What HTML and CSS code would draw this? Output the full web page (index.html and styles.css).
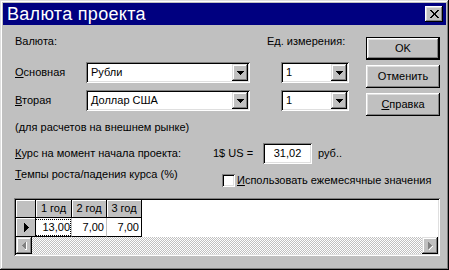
FILE: index.html
```html
<!DOCTYPE html>
<html lang="ru">
<head>
<meta charset="utf-8">
<title>Валюта проекта</title>
<link rel="stylesheet" href="styles.css">
</head>
<body>
<div class="window">
  <div class="titlebar">
    <span class="title">Валюта проекта</span>
    <div class="close">
      <svg width="9" height="8" viewBox="0 0 9 8" shape-rendering="crispEdges"><path d="M0 0h2v1H0zM7 0h2v1H7zM1 1h2v1H1zM6 1h2v1H6zM2 2h2v1H2zM5 2h2v1H5zM3 3h3v2H3zM2 5h2v1H2zM5 5h2v1H5zM1 6h2v1H1zM6 6h2v1H6zM0 7h2v1H0zM7 7h2v1H7z" fill="#000"/></svg>
    </div>
  </div>
  <div class="body">
    <div class="top">
      <div class="form">
        <div class="head">
          <span class="head-left">Валюта:</span>
          <span>Ед. измерения:</span>
        </div>
        <div class="row row-first">
          <span class="lbl"><u>О</u>сновная</span>
          <div class="combo combo-wide">
            <span class="val">Рубли</span>
            <span class="drop"><svg width="7" height="4" viewBox="0 0 7 4" shape-rendering="crispEdges"><path d="M0 0h7v1H0zM1 1h5v1H1zM2 2h3v1H2zM3 3h1v1H3z" fill="#000"/></svg></span>
          </div>
          <div class="combo combo-narrow">
            <span class="val">1</span>
            <span class="drop"><svg width="7" height="4" viewBox="0 0 7 4" shape-rendering="crispEdges"><path d="M0 0h7v1H0zM1 1h5v1H1zM2 2h3v1H2zM3 3h1v1H3z" fill="#000"/></svg></span>
          </div>
        </div>
        <div class="row row-second">
          <span class="lbl"><u>В</u>торая</span>
          <div class="combo combo-wide">
            <span class="val">Доллар США</span>
            <span class="drop"><svg width="7" height="4" viewBox="0 0 7 4" shape-rendering="crispEdges"><path d="M0 0h7v1H0zM1 1h5v1H1zM2 2h3v1H2zM3 3h1v1H3z" fill="#000"/></svg></span>
          </div>
          <div class="combo combo-narrow">
            <span class="val">1</span>
            <span class="drop"><svg width="7" height="4" viewBox="0 0 7 4" shape-rendering="crispEdges"><path d="M0 0h7v1H0zM1 1h5v1H1zM2 2h3v1H2zM3 3h1v1H3z" fill="#000"/></svg></span>
          </div>
        </div>
        <div class="note">(для расчетов на внешнем рынке)</div>
      </div>
      <div class="buttons">
        <div class="btn btn-default">OK</div>
        <div class="btn">Отменить</div>
        <div class="btn"><u>С</u>правка</div>
      </div>
    </div>
    <div class="rate">
      <span class="rate-label"><u>К</u>урс на момент начала проекта:</span>
      <span class="rate-us">1$ US =</span>
      <div class="field">31,02</div>
      <span class="rate-unit">руб..</span>
    </div>
    <div class="growth">
      <span class="growth-label"><u>Т</u>емпы роста/падения курса (%)</span>
      <div class="check-group">
        <span class="checkbox"></span>
        <span class="check-label"><u>И</u>спользовать ежемесячные значения</span>
      </div>
    </div>
    <div class="grid">
      <div class="grid-area">
        <div class="grid-row grid-header">
          <div class="cell cell-ind cell-fixed"></div>
          <div class="cell cell-col cell-fixed cell-first">1 год</div>
          <div class="cell cell-col cell-fixed">2 год</div>
          <div class="cell cell-col cell-fixed">3 год</div>
        </div>
        <div class="grid-row grid-data">
          <div class="cell cell-ind cell-fixed">
            <svg width="5" height="9" viewBox="0 0 5 9" shape-rendering="crispEdges"><path d="M0 0h1v9H0zM1 1h1v7H1zM2 2h1v5H2zM3 3h1v3H3zM4 4h1v1H4z" fill="#000"/></svg>
          </div>
          <div class="cell cell-col cell-num cell-first"><span class="focus">13,00</span></div>
          <div class="cell cell-col cell-num">7,00</div>
          <div class="cell cell-col cell-num cell-last">7,00</div>
        </div>
      </div>
      <div class="scrollbar">
        <div class="sbtn">
          <svg width="5" height="8" viewBox="0 0 5 8" shape-rendering="crispEdges"><path d="M3 0h1v7H3zM2 1h1v5H2zM1 2h1v3H1zM0 3h1v1H0z" fill="#808080"/><path d="M4 0h1v8H4zM3 7h1v1H3z" fill="#fff"/></svg>
        </div>
        <div class="track"></div>
        <div class="sbtn">
          <svg width="5" height="8" viewBox="0 0 5 8" shape-rendering="crispEdges"><path d="M0 0h1v7H0zM1 1h1v5H1zM2 2h1v3H2zM3 3h1v1H3z" fill="#808080"/><path d="M4 4h1v1H4zM3 5h1v1H3zM2 6h1v1H2zM1 7h1v1H1z" fill="#fff"/></svg>
        </div>
      </div>
    </div>
  </div>
</div>
</body>
</html>
```
FILE: styles.css
```css
* { box-sizing: border-box; }
html, body { margin: 0; padding: 0; }
body {
  width: 449px;
  height: 270px;
  overflow: hidden;
  background: #c0c0c0;
  font-family: "Liberation Sans", Arial, sans-serif;
  font-size: 11px;
  line-height: 13px;
  color: #000;
}
u { text-decoration: underline; text-underline-offset: 1px; }

.window {
  width: 449px;
  height: 270px;
  padding: 3px;
  background: #c0c0c0;
  box-shadow: inset -1px -1px #000, inset 1px 1px #dfdfdf, inset -2px -2px #808080, inset 2px 2px #fff;
  display: flex;
  flex-direction: column;
}

.titlebar {
  height: 22px;
  background: #000080;
  color: #fff;
  display: flex;
  align-items: center;
  justify-content: space-between;
  padding: 0 3px 0 4px;
}
.title { font-size: 18px; line-height: 22px; letter-spacing: 0.3px; }
.close {
  width: 18px;
  height: 16px;
  background: #c0c0c0;
  box-shadow: inset -1px -1px #000, inset 1px 1px #fff, inset -2px -2px #808080, inset 2px 2px #dfdfdf;
  display: flex;
  align-items: center;
  justify-content: center;
}
.close svg { display: block; }

.body {
  flex: 1;
  padding: 0 6px 0 11px;
  display: flex;
  flex-direction: column;
}
.top { display: flex; }
.form { width: 352px; }

.head { display: flex; margin-top: 10px; height: 13px; }
.head-left { width: 253px; padding-left: 1px; }

.row { display: flex; align-items: center; height: 21px; }
.row-first { margin-top: 14px; }
.row-second { margin-top: 7px; }
.lbl { width: 72px; padding-left: 1px; }

.combo {
  height: 21px;
  background: #fff;
  padding: 2px;
  display: flex;
  box-shadow: inset 1px 1px #808080, inset -1px -1px #fff, inset 2px 2px #000, inset -2px -2px #dfdfdf;
}
.combo-wide { width: 164px; }
.combo-narrow { width: 68px; margin-left: 31px; }
.combo .val { flex: 1; padding-left: 3px; line-height: 17px; }
.drop {
  width: 16px;
  height: 17px;
  background: #c0c0c0;
  box-shadow: inset -1px -1px #000, inset 1px 1px #dfdfdf, inset -2px -2px #808080, inset 2px 2px #fff;
  display: flex;
  align-items: center;
  justify-content: center;
}
.drop svg { display: block; margin-top: 1px; }

.note { margin-top: 10px; padding-left: 1px; }

.buttons {
  width: 74px;
  margin-top: 12px;
  display: flex;
  flex-direction: column;
  gap: 5px;
}
.btn {
  height: 23px;
  background: #c0c0c0;
  box-shadow: inset -1px -1px #000, inset 1px 1px #fff, inset -2px -2px #808080, inset 2px 2px #dfdfdf;
  display: flex;
  align-items: center;
  justify-content: center;
}
.btn-default { border: 1px solid #000; }

.rate { display: flex; align-items: center; height: 21px; margin-top: 9px; }
.rate-label { width: 199px; padding-left: 1px; }
.rate-us { width: 50px; }
.field {
  width: 49px;
  height: 21px;
  background: #fff;
  box-shadow: inset 1px 1px #808080, inset -1px -1px #fff, inset 2px 2px #000, inset -2px -2px #dfdfdf;
  display: flex;
  align-items: center;
  justify-content: center;
}
.rate-unit { margin-left: 6px; }

.growth { display: flex; align-items: flex-start; margin-top: 4px; }
.growth-label { width: 208px; padding-left: 1px; }
.check-group { display: flex; align-items: center; margin-top: 6px; }
.checkbox {
  width: 13px;
  height: 13px;
  background: #fff;
  box-shadow: inset 1px 1px #808080, inset -1px -1px #fff, inset 2px 2px #000, inset -2px -2px #dfdfdf;
}
.check-label { margin-left: 2px; }

.grid {
  margin-top: 11px;
  height: 58px;
  padding: 2px;
  background: #fff;
  box-shadow: inset 1px 1px #808080, inset -1px -1px #fff, inset 2px 2px #000, inset -2px -2px #dfdfdf;
  display: flex;
  flex-direction: column;
}
.grid-area { flex: 1; background: #fff; }
.grid-row { display: flex; }
.grid-header { height: 18px; }
.grid-data { height: 19px; }
.cell {
  display: flex;
  align-items: center;
  border-right: 1px solid #000;
  border-bottom: 1px solid #000;
}
.cell-fixed {
  background: #c0c0c0;
  box-shadow: inset 1px 1px #fff;
}
.cell-ind { width: 20px; justify-content: center; }
.cell-ind svg { display: block; margin-left: 2px; }
.cell-col { width: 35px; justify-content: center; }
.cell-first { width: 36px; }
.cell-num {
  background: #fff;
  justify-content: flex-end;
  padding-right: 2px;
  border-right-color: #c0c0c0;
}
.cell-last { border-right-color: #000; }
.focus {
  outline: 1px dotted #000;
  outline-offset: 0;
  padding: 1px 0 1px 6px;
  margin-right: -1px;
}

.scrollbar { height: 17px; display: flex; }
.sbtn {
  width: 16px;
  height: 17px;
  background: #c0c0c0;
  box-shadow: inset -1px -1px #000, inset 1px 1px #dfdfdf, inset -2px -2px #808080, inset 2px 2px #fff;
  display: flex;
  align-items: center;
  justify-content: center;
}
.sbtn svg { display: block; }
.track {
  flex: 1;
  background: repeating-conic-gradient(#fff 0 25%, #c0c0c0 0 50%) 0 0 / 2px 2px;
}
```
